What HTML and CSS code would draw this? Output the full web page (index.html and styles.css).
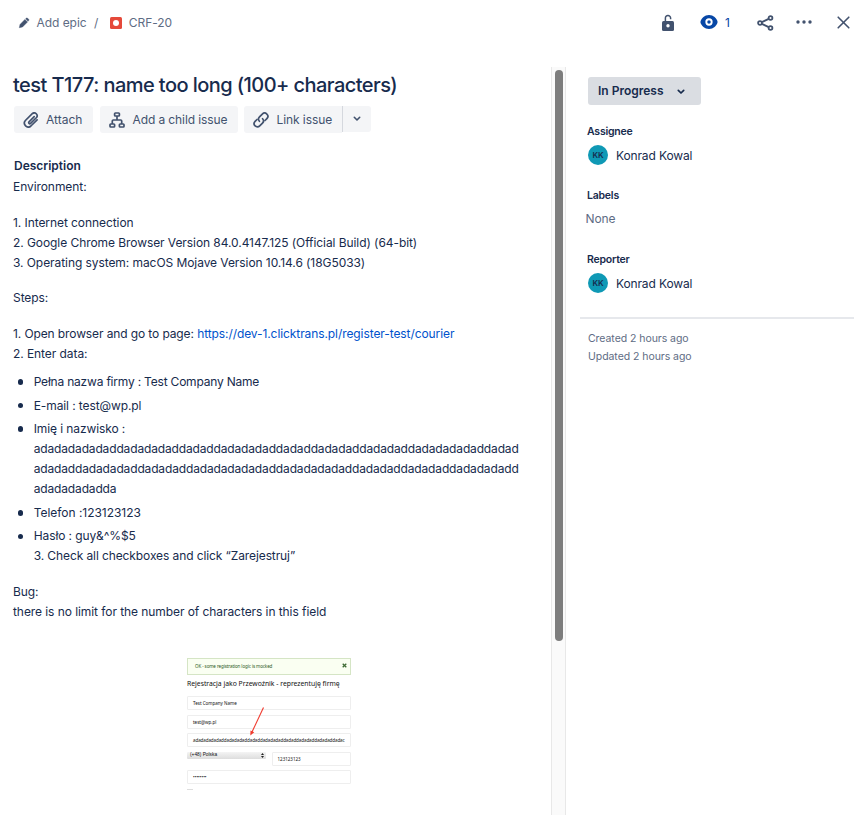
FILE: index.html
```html
<!DOCTYPE html>
<html lang="en">
<head>
<meta charset="utf-8">
<title>CRF-20</title>
<link rel="stylesheet" href="styles.css">
</head>
<body>
<header class="topbar">
  <nav class="crumbs">
    <svg class="pencil" width="12" height="12" viewBox="0 0 12 12"><path d="M1.300 10.700l.7-3.200L6.900 2.400 9.500 5 4.500 10zM7.600 1.800l.8-.7q.6-.4 1.200.1l1.100 1.100q.5.600 0 1.200l-.7.800z" fill="currentColor" stroke="currentColor" stroke-width=".4" stroke-linejoin="round"/></svg>
    <span class="crumb-epic">Add epic</span>
    <span class="slash">/</span>
    <svg class="bug" width="12" height="12" viewBox="0 0 12 12"><rect width="12" height="12" rx="1.500" fill="#e5493a"/><circle cx="6" cy="6" r="3" fill="#fff"/></svg>
    <span class="crumb-key">CRF-20</span>
  </nav>
  <div class="actions">
    <svg class="lock" width="14" height="18" viewBox="0 0 14 18"><path d="M4.400 8V4.200a2.600 2.600 0 0 1 5.200-.2v1.300" fill="none" stroke="currentColor" stroke-width="1.500"/><rect x="1" y="7" width="12" height="10" rx="1.500" fill="currentColor"/><circle cx="7" cy="11.800" r="1.700" fill="#fff"/></svg>
    <span class="watch"><svg width="18" height="14" viewBox="0 0 18 14"><path d="M9 0C4.500 0 1.500 3.400.6 6q-.3 1 0 2C1.500 10.600 4.500 14 9 14s7.500-3.400 8.400-6q.3-1 0-2C16.500 3.400 13.500 0 9 0z" fill="currentColor"/><circle cx="9" cy="7" r="2.700" fill="none" stroke="#fff" stroke-width="1.900"/></svg><span class="watch-count">1</span></span>
    <svg class="share" width="17" height="16" viewBox="0 0 17 16"><g fill="none" stroke="currentColor" stroke-width="1.800"><circle cx="3" cy="8" r="1.900"/><circle cx="13.500" cy="3" r="1.900"/><circle cx="13.500" cy="13" r="1.900"/><path d="M4.900 7.100l6.800-3.200M4.900 8.900l6.800 3.200"/></g></svg>
    <svg class="more" width="16" height="4" viewBox="0 0 16 4"><g fill="currentColor"><circle cx="2" cy="2" r="1.700"/><circle cx="8" cy="2" r="1.700"/><circle cx="14" cy="2" r="1.700"/></g></svg>
    <svg class="close" width="13" height="13" viewBox="0 0 13 13"><path d="M1.200 1.200l10.600 10.600M11.800 1.200L1.200 11.800" stroke="currentColor" stroke-width="1.600" stroke-linecap="round"/></svg>
  </div>
</header>
<div class="columns">
  <main class="issue">
    <h1 class="title">test T177: name too long (100+ characters)</h1>
    <div class="toolbar">
      <div class="btn attach">
        <svg width="16" height="16" viewBox="0 0 16 16"><path d="M11.200 4.600L6 9.800a1.100 1.100 0 0 0 1.600 1.600l5.900-5.900a2.850 2.850 0 0 0-4-4L2.400 8.500a3.900 3.900 0 0 0 5.500 5.500l6.200-6.200" fill="none" stroke="currentColor" stroke-width="1.700" stroke-linecap="round"/></svg>
        <span>Attach</span>
      </div>
      <div class="btn child">
        <svg width="16" height="16" viewBox="0 0 16 16"><g fill="none" stroke="currentColor" stroke-width="1.700"><rect x="5.600" y="1" width="4.800" height="3" rx=".8"/><rect x="1" y="12" width="4.600" height="3" rx=".8"/><rect x="10.400" y="12" width="4.600" height="3" rx=".8"/><path d="M8 4v4M3.300 12V9q0-1 1-1h7.400q1 0 1 1v3"/></g></svg>
        <span>Add a child issue</span>
      </div>
      <div class="split">
        <div class="btn link">
          <svg width="16" height="16" viewBox="0 0 16 16"><g fill="none" stroke="currentColor" stroke-width="1.700" stroke-linecap="round"><path d="M6.400 9.300a3.200 3.200 0 0 1 .1-4.400l2.800-2.800a3.200 3.200 0 0 1 4.600 4.500L12 8.500"/><path d="M9.600 6.700a3.200 3.200 0 0 1-.1 4.400l-2.800 2.800a3.200 3.200 0 0 1-4.600-4.500L4 7.500"/></g></svg>
          <span>Link issue</span>
        </div>
        <div class="drop"><svg width="8" height="6" viewBox="0 0 8 6"><path d="M1.300 1.300L4 4l2.700-2.700" fill="none" stroke="currentColor" stroke-width="1.600" stroke-linecap="round" stroke-linejoin="round"/></svg></div>
      </div>
    </div>
    <h2 class="desc-title">Description</h2>
    <div class="desc">
      <p>Environment:</p>
      <p>1. Internet connection<br>2. Google Chrome Browser Version 84.0.4147.125 (Official Build) (64-bit)<br>3. Operating system: macOS Mojave Version 10.14.6 (18G5033)</p>
      <p>Steps:</p>
      <p><span class="step">1. Open browser and go to page: </span><a class="url">https://dev-1.clicktrans.pl/register-test/courier</a><br>2. Enter data:</p>
      <ul class="list">
        <li class="tight">Pełna nazwa firmy : Test Company Name</li>
        <li>E-mail : test@wp.pl</li>
        <li>Imię i nazwisko :<br><span class="long">adadadadadaddadadadaddadaddadadadaddadaddadadaddadadaddadadadadaddadad<br>adadaddadadadaddadadaddadadadadadaddadadadadaddadadaddadadaddadadadadd<br>adadadadadda</span></li>
        <li class="loose">Telefon :123123123</li>
        <li>Hasło : guy&amp;^%$5<br>3. Check all checkboxes and click “Zarejestruj”</li>
      </ul>
      <p>Bug:<br>there is no limit for the number of characters in this field</p>
    </div>
    <div class="shot">
      <div class="alert"><span>OK - some registration logic is mocked</span><svg width="5" height="5" viewBox="0 0 5 5"><path d="M.7.7l3.600 3.600M4.300.7L.7 4.300" stroke="#3f6b35" stroke-width="1.300"/></svg></div>
      <div class="shot-title">Rejestracja jako Przewoźnik - reprezentuję firmę</div>
      <div class="field">Test Company Name</div>
      <div class="field">test@wp.pl</div>
      <div class="field packed">adadadadadaddadadadaddadaddadadadaddadaddadadaddadadaddadac</div>
      <div class="phone">
        <div class="country"><span>(+48) Polska</span><svg width="3" height="5" viewBox="0 0 3 5"><path d="M0 2L1.500 0 3 2zM0 3l1.500 2L3 3z" fill="#222"/></svg></div>
        <div class="field number">123123123</div>
      </div>
      <div class="field pass">••••••••</div>
      <div class="cut"></div>
      <svg class="arrow" width="16" height="30" viewBox="0 0 16 30"><path d="M14.500.5L3 25" stroke="#f03a2e" stroke-width="1.100" fill="none"/><path d="M1.300 28.500l.2-5 3.800 1.700z" fill="#f03a2e"/></svg>
    </div>
  </main>
  <div class="track"><div class="thumb"></div></div>
  <aside class="side">
    <div class="status"><span>In Progress</span><svg width="8" height="6" viewBox="0 0 8 6"><path d="M1.300 1.300L4 4l2.700-2.700" fill="none" stroke="currentColor" stroke-width="1.700" stroke-linecap="round" stroke-linejoin="round"/></svg></div>
    <div class="label">Assignee</div>
    <div class="person"><span class="avatar">KK</span><span class="name">Konrad Kowal</span></div>
    <div class="label">Labels</div>
    <div class="none">None</div>
    <div class="label">Reporter</div>
    <div class="person"><span class="avatar">KK</span><span class="name">Konrad Kowal</span></div>
    <div class="dates"><div class="created">Created 2 hours ago</div><div>Updated 2 hours ago</div></div>
  </aside>
</div>
</body>
</html>
```
FILE: styles.css
```css
* { box-sizing: border-box; }
body {
  margin: 0;
  width: 860px;
  height: 815px;
  overflow: hidden;
  background: #fff;
  color: #172b4d;
  font: 12px/20px Inter, "Liberation Sans", sans-serif;
}
svg { display: block; flex: none; }
h1, h2, p, ul { margin: 0; padding: 0; font-size: inherit; }
span, a, li, h1 { white-space: nowrap; }

.topbar {
  display: flex;
  justify-content: space-between;
  height: 67px;
  padding: 13px 10px 0 18px;
  color: #42526e;
}
.crumbs, .actions { display: flex; align-items: center; height: 20px; }
.crumbs { color: #5e6c84; letter-spacing: -0.05px; }
.pencil { color: #42526e; margin-right: 6.500px; }
.slash { margin: 0 12px 0 7.500px; }
.bug { margin-right: 6.500px; }
.lock { margin-right: 25px; }
.watch { display: flex; align-items: center; color: #0747a6; margin-right: 27px; }
.watch svg { margin-top: -2px; }
.watch-count { margin-left: 7px; }
.share { margin-right: 22px; }
.more { margin: -2px 25px 0 0; }
.close { margin-top: -1px; }

.columns { display: flex; height: 748px; }
.issue { width: 551px; padding: 6px 0 0 13px; overflow: hidden; }
.title { font-size: 20px; line-height: 24px; font-weight: 500; letter-spacing: -0.56px; }
.toolbar { display: flex; padding: 9px 0 0 1px; color: #42526e; }
.btn {
  display: flex;
  align-items: center;
  height: 27px;
  padding-left: 9px;
  background: #f4f5f7;
  border-radius: 3px;
}
.btn svg { margin-right: 7px; }
.attach { width: 79px; margin-right: 7px; }
.child { width: 138px; margin-right: 6px; letter-spacing: -0.1px; }
.link { width: 98px; border-radius: 3px 0 0 3px; letter-spacing: -0.08px; }
.child svg, .link svg { margin-right: 7.500px; }
.split { display: flex; }
.drop {
  display: flex;
  align-items: center;
  justify-content: center;
  width: 29px;
  height: 26px;
  background: #f4f5f7;
  border-left: 1px solid #d5d8de;
  border-radius: 0 3px 3px 0;
}
.desc-title { margin: 23px 0 0 1px; font-weight: 600; line-height: 20px; }
.desc { padding-top: 1px; letter-spacing: -0.07px; }
.desc p + p { margin-top: 15.700px; }
.step { letter-spacing: -0.11px; }
.url { color: #0052cc; letter-spacing: -0.085px; }
.list { list-style: none; margin: 8px 0 16px; padding-left: 20.700px; letter-spacing: -0.1px; }
.list li { position: relative; margin-bottom: 3.600px; }
.list .tight { letter-spacing: -0.2px; }
.list .loose { letter-spacing: -0.03px; }
.long { letter-spacing: -0.15px; }
.list li::before {
  content: "";
  position: absolute;
  left: -16px;
  top: 7.200px;
  width: 5.500px;
  height: 5.500px;
  border-radius: 50%;
  background: #172b4d;
}

.shot {
  position: relative;
  width: 163.500px;
  margin: 36px 0 0 174px;
  font: 4.500px/8px "Noto Sans", sans-serif;
  color: #111;
}
.alert {
  display: flex;
  align-items: center;
  justify-content: space-between;
  height: 17px;
  padding: 0 3px 2px 7px;
  border: 1px solid #d5e5c5;
  background: #fafff2;
  color: #2f5b25;
  letter-spacing: -0.1px;
}
.shot-title { margin: 3px 0 6px; font-size: 6.800px; line-height: 12px; white-space: nowrap; }
.field {
  height: 14px;
  margin-bottom: 4.500px;
  padding: 2px 5px;
  border: 1px solid #eee;
  border-radius: 1px;
  white-space: nowrap;
}
.packed { letter-spacing: -0.08px; }
.phone { display: flex; justify-content: space-between; }
.country {
  display: flex;
  align-items: center;
  justify-content: space-between;
  width: 79px;
  height: 7px;
  padding: 0 2px 0 3px;
  background: linear-gradient(#f4f4f4, #ddd);
  border-radius: 1px;
  font-family: "Liberation Sans", sans-serif;
  font-size: 4.800px;
}
.number { width: 79px; }
.cut { width: 6px; height: 1px; background: #ddd; }
.arrow { position: absolute; left: 62px; top: 49px; }

.track {
  width: 15px;
  padding: 3px 0 0 3px;
  background: #fafafa;
  border: solid #e8e8e8;
  border-width: 0 1px;
}
.thumb { width: 8px; height: 571px; border-radius: 4px; background: #7d7d7d; }

.side { width: 294px; padding: 10px 6px 0 14px; }
.status {
  display: flex;
  align-items: center;
  width: 113px;
  height: 28px;
  margin: 0 0 17px 8px;
  padding: 0 16px 0 10px;
  justify-content: space-between;
  border-radius: 3px;
  background: #dadde2;
  font-weight: 600;
}
.status svg { margin-top: 2px; }
.label { height: 20px; margin-left: 7px; font-size: 10.500px; font-weight: 600; letter-spacing: -0.22px; }
.person { display: flex; align-items: center; height: 20px; margin: 3px 0 21px 8px; }
.name { padding-top: 2px; letter-spacing: -0.13px; }
.avatar {
  width: 20px;
  height: 20px;
  margin-right: 8px;
  border-radius: 50%;
  background: #0f99b5;
  text-align: center;
  font-size: 8px;
  font-weight: 600;
}
.none { height: 20px; margin: 3px 0 21px 5.500px; color: #5e6c84; letter-spacing: -0.1px; }
.dates {
  margin-top: 24px;
  padding: 11px 0 0 8px;
  border-top: 2px solid #e6e8ec;
  color: #5e6c84;
  font-size: 10.500px;
  line-height: 18px;
  letter-spacing: -0.05px;
}
```
